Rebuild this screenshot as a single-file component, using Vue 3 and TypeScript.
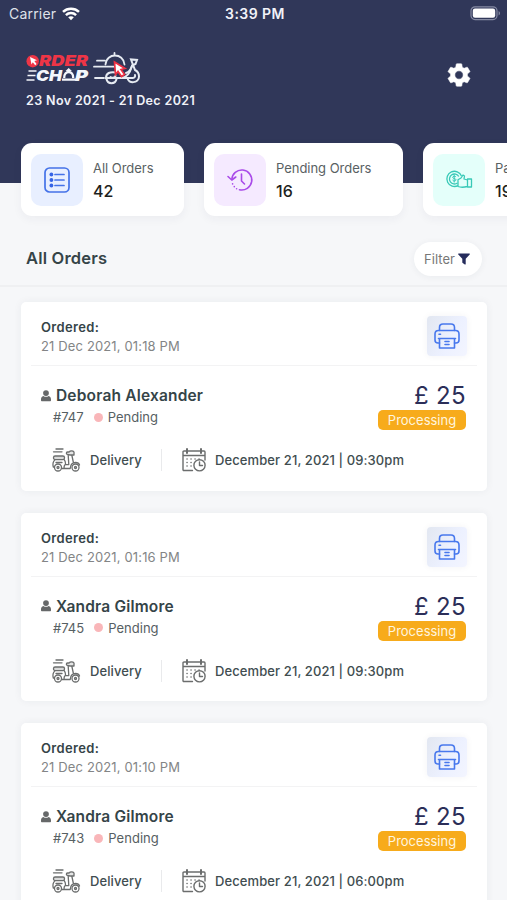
<script setup lang="ts">
interface Stat {
  label: string
  value: string
  kind: 'list' | 'history' | 'paid'
}

interface Order {
  id: string
  placed: string
  customer: string
  status: string
  total: string
  stage: string
  method: string
  due: string
}

const stats: Stat[] = [
  { label: 'All Orders', value: '42', kind: 'list' },
  { label: 'Pending Orders', value: '16', kind: 'history' },
  { label: 'Paid Orders', value: '19', kind: 'paid' },
]

const orders: Order[] = [
  { id: '#747', placed: '21 Dec 2021, 01:18 PM', customer: 'Deborah Alexander', status: 'Pending', total: '£ 25', stage: 'Processing', method: 'Delivery', due: 'December 21, 2021 | 09:30pm' },
  { id: '#745', placed: '21 Dec 2021, 01:16 PM', customer: 'Xandra Gilmore', status: 'Pending', total: '£ 25', stage: 'Processing', method: 'Delivery', due: 'December 21, 2021 | 09:30pm' },
  { id: '#743', placed: '21 Dec 2021, 01:10 PM', customer: 'Xandra Gilmore', status: 'Pending', total: '£ 25', stage: 'Processing', method: 'Delivery', due: 'December 21, 2021 | 06:00pm' },
]
</script>

<template>
  <main class="screen">
    <header class="header">
      <div class="status-bar">
        <div class="carrier">
          <span>Carrier</span>
          <svg width="18" height="14" viewBox="0 0 18 14" fill="none" stroke="#fff" stroke-width="2.5">
            <path d="M1 4.900C5.500.7 12.500.7 17 4.900" />
            <path d="M3.900 8.100C6.800 5.400 11.200 5.400 14.100 8.100" />
            <path d="M6.200 10.300C7.800 8.800 10.200 8.800 11.800 10.300L9 13.300Z" fill="#fff" stroke="none" />
          </svg>
        </div>
        <span class="clock">3:39 PM</span>
        <div class="battery">
          <svg width="31" height="15" viewBox="0 0 31 15">
            <rect x="1" y="0.800" width="26" height="12.800" rx="4" fill="none" stroke="#858aa3" stroke-width="1.200" />
            <rect x="2.800" y="2.600" width="22.400" height="9.200" rx="2.200" fill="#fff" />
            <path d="M28.600 5v4.400c1.900-.8 1.900-3.600 0-4.400Z" fill="#858aa3" />
          </svg>
        </div>
      </div>
      <div class="brand-row">
        <div>
          <svg class="logo" width="116" height="33" viewBox="0 0 116 33">
            <circle cx="6.700" cy="9.200" r="6.200" fill="#ee3546" />
            <path d="m4 5 7 3.300-2.700.8 2.300 2.900-1.400 1.200-2.400-2.900-1.300 2.300Z" fill="#fff" />
            <text class="logo-type" x="13" y="14.200" fill="#ee3546" textLength="49" lengthAdjust="spacingAndGlyphs">RDER</text>
            <path d="M2.500 19h8M1.500 23.500h8M.5 28h8" stroke="#f4f6fb" stroke-width="1.500" />
            <text class="logo-type" x="10" y="28.800" fill="#f4f6fb" textLength="26" lengthAdjust="spacingAndGlyphs">CH</text>
            <path d="M36 27.700h14M38.200 26c-.5-8 9.500-8 9 0" fill="none" stroke="#f4f6fb" stroke-width="2.300" />
            <path d="m39.500 19 3.200-3 3.200 3" fill="#f4f6fb" />
            <text class="logo-type" x="49" y="28.800" fill="#f4f6fb" textLength="13" lengthAdjust="spacingAndGlyphs">P</text>
            <g fill="none" stroke="#e6ebf2" stroke-width="1.800" stroke-linecap="round">
              <path d="M71 8.700h8M68 14.700h22M69 26h9" />
              <path d="M79.500 12.500c1-12 18-12 19 0M88.500 3V1" />
              <path d="M90 20.500c-6-1-10 .5-10 5.500h16c5-1 8-5 9.500-11" stroke-width="2" />
              <path d="M80.500 27c1 5.500 9 5.500 10 0M84.500 25c2 1.500 4 1 5-1" stroke-width="2" />
              <path d="M101.500 26c.5 6 11.500 5.500 11.500-1.500 0-4-2-5.500-4-6.500l-4-10.500 6 .500-1.500 4-3.500 1.500" stroke-width="2" />
              <path d="M100 21c3-1 5-3.500 6-7M94 26h13c1.500 0 2.500-1.500 2-3" stroke-width="2" />
            </g>
            <path d="m88.500 10 10.500 6.500-4 1 3.500 5-3 2-3.500-5-2.500 3Z" fill="#fff" stroke="#ed3043" stroke-width="1.700" />
          </svg>
          <div class="range">23 Nov 2021 - 21 Dec 2021</div>
        </div>
        <svg class="gear" width="28" height="28" viewBox="0 0 24 24" fill="#fff" stroke="#fff" stroke-width=".5">
          <path d="M19.140 12.940c.04-.3.060-.61.060-.94s-.02-.64-.07-.94l2.030-1.580a.49.49 0 0 0 .12-.61l-1.920-3.320a.49.49 0 0 0-.59-.22l-2.390.96a7 7 0 0 0-1.620-.94l-.36-2.540a.48.48 0 0 0-.48-.41h-3.840a.48.48 0 0 0-.47.41l-.36 2.540a7.400 7.400 0 0 0-1.620.94l-2.390-.96a.48.48 0 0 0-.59.22L2.740 8.870a.48.48 0 0 0 .12.61l2.030 1.580c-.05.3-.09.630-.09.940s.02.640.07.940l-2.030 1.580a.49.49 0 0 0-.12.610l1.920 3.320c.12.22.37.290.59.220l2.390-.96c.5.380 1.030.7 1.620.940l.36 2.540c.05.240.240.410.480.410h3.840c.24 0 .44-.17.470-.41l.36-2.540a7 7 0 0 0 1.620-.94l2.390.96c.22.080.47 0 .59-.22l1.920-3.320a.48.48 0 0 0-.12-.61ZM12 15.600a3.600 3.600 0 1 1 0-7.200 3.600 3.600 0 0 1 0 7.200Z" />
        </svg>
      </div>
    </header>

    <section class="stats">
      <article v-for="stat in stats" :key="stat.kind" class="stat" :class="`stat-${stat.kind}`">
        <div class="stat-icon">
          <svg v-if="stat.kind === 'list'" width="26" height="26" viewBox="0 0 26 26" fill="none" stroke="#4472e8" stroke-width="1.700" stroke-linecap="round">
            <rect x="1" y="1" width="24" height="24" rx="4.500" />
            <path d="M11 7.500h9M11 13h9M11 18.500h9" />
            <g fill="#3563e6" stroke="none">
              <circle cx="7.400" cy="7.500" r="1.900" /><circle cx="7.400" cy="13" r="1.900" /><circle cx="7.400" cy="18.500" r="1.900" />
            </g>
          </svg>
          <svg v-else-if="stat.kind === 'history'" width="26" height="24" viewBox="0 0 26 24" fill="none" stroke="#a94be9" stroke-width="1.600" stroke-linecap="round" stroke-linejoin="round">
            <path d="M4.800 11.500A10 10 0 1 1 12.500 21.700" />
            <path d="m1 8.500 3.800 3.500 4-3M14.500 6v7l3 3" />
            <path d="M5.600 15.800v.1M7.300 18.600v.1M9.600 20.700v.1" />
          </svg>
          <svg v-else width="26" height="20" viewBox="0 0 26 20" fill="none" stroke="#38c9b7" stroke-width="1.300" stroke-linejoin="round">
            <path d="M15.500 6A7.600 7.600 0 1 0 12 15.600" />
            <path d="M12.800 6.500a5 5 0 1 0-1.300 6.500" />
            <path d="M10 7c-.5-1.200-3.500-1-3.300.5.200 1.500 3.300.700 3.300 2.300s-3 1.500-3.500.2M8.200 4.800v7.700" stroke-width="1" />
            <path d="M12 16.500V9.800l3-1.800 2-3 1.500 1-.5 3 3.500 1v6.500c-4 1-7 1-9.500 0ZM21.500 9h4v8h-4Z" />
          </svg>
        </div>
        <div class="stat-text">
          <span class="stat-label">{{ stat.label }}</span>
          <strong class="stat-value">{{ stat.value }}</strong>
        </div>
      </article>
    </section>

    <section class="toolbar">
      <h1>All Orders</h1>
      <button class="filter" type="button">
        <span>Filter</span>
        <svg width="12" height="12" viewBox="0 0 12 12" fill="#252c5c"><path d="M.6.500h10.800c.5 0 .7.500.3.900L7.700 5.700V11c0 .5-.5.700-.9.400L4.700 9.900a.8.800 0 0 1-.4-.7V5.700L.3 1.400C-.1 1 .1.500.6.500Z" /></svg>
      </button>
    </section>

    <section class="orders">
      <article v-for="order in orders" :key="order.id" class="order">
        <div class="order-head">
          <div>
            <div class="ordered">Ordered:</div>
            <div class="placed">{{ order.placed }}</div>
          </div>
          <button class="print" type="button" aria-label="Print">
            <svg width="26" height="26" viewBox="0 0 26 26" fill="none" stroke="#4878ed" stroke-width="1.600" stroke-linecap="round" stroke-linejoin="round">
              <path d="M5.500 7.500v-3C5.500 2 6.500 1 9 1h8c2.500 0 3.500 1 3.500 3.500v3" />
              <path d="M5.500 20H4c-2 0-3-1-3-3v-6c0-2.500 1-3.500 3.500-3.500h17c2.500 0 3.500 1 3.500 3.500v6c0 2-1 3-3 3h-1.500" />
              <path d="M4.500 15.500h17M5.500 15.500V25h15v-9.500M11 18.500h4M11 21.500h4M5 11.300h1.500" />
            </svg>
          </button>
        </div>
        <div class="order-body">
          <div>
            <div class="customer">
              <svg width="10" height="12" viewBox="0 0 10 12" fill="#666869"><circle cx="5" cy="3.100" r="2.900" /><path d="M2.400 5.900c1.500 1.200 3.700 1.200 5.200 0C9.300 6.300 10 7.700 10 9.500v.7c0 .7-.4 1.100-1.100 1.100H1.100C.4 11.300 0 10.900 0 10.200v-.7c0-1.800.7-3.200 2.400-3.600Z" /></svg>
              <span>{{ order.customer }}</span>
            </div>
            <div class="meta">
              <span class="order-id">{{ order.id }}</span>
              <i class="dot"></i>
              <span class="pending">{{ order.status }}</span>
            </div>
          </div>
          <div class="amount">
            <div class="total">{{ order.total }}</div>
            <div class="stage">{{ order.stage }}</div>
          </div>
        </div>
        <div class="order-foot">
          <svg class="scooter" width="28" height="24" viewBox="0 0 28 24" fill="none" stroke="#6b6d6d" stroke-width="1.300" stroke-linecap="round" stroke-linejoin="round">
            <path d="M4 1h7M1.500 3.800h8.500" />
            <rect x="1.500" y="8" width="11" height="3.600" rx="1.600" fill="#d9dada" />
            <path d="M3 11.600c-2 2-2.500 4.500-1.700 7.400h1.500M12 11.600c1.200 1 1.600 3 1.600 5h3.200l-.6-9.600M19.800 7l1.600 7.500M9.500 20.500h8.700c.3-4 2.300-6 5.300-6 2 0 3.500.700 4 2.500M13.600 16.600c-1 0-1.500 1-1.500 3M4 14.500h6" />
            <path d="M15.500 6.300c-1.500 0-1.500-2.300 0-2.300h1.700c.8-1.500 3.800-1.500 4.800 0v3h-4Z" fill="#e4e5e5" />
            <circle cx="6" cy="19.500" r="3.500" fill="#fff" /><circle cx="6" cy="19.500" r="1" /><circle cx="23.500" cy="19.500" r="3.500" fill="#fff" /><circle cx="23.500" cy="19.500" r="1" />
          </svg>
          <span class="method">{{ order.method }}</span>
          <i class="separator"></i>
          <svg class="calendar" width="24" height="24" viewBox="0 0 24 24" fill="none" stroke="#6b6d6d" stroke-width="1.400" stroke-linecap="round" stroke-linejoin="round">
            <path d="M10.500 22.500H2c-.8 0-1-.4-1-1V4c0-.7.300-1 1-1h20c.7 0 1 .3 1 1v8M1 7.500h22" />
            <path d="M5 1v4M19 1v4" stroke-width="2" />
            <path d="M5 11h.1M9 11h.1M13 11h.1M17 11h.1M5 14.500h.1M9 14.500h.1M5 18h.1M9 18h.1" stroke-width="1.500" />
            <circle cx="17.500" cy="17.300" r="5.600" /><path d="M17.500 14v3.500h3" />
          </svg>
          <span class="due">{{ order.due }}</span>
        </div>
      </article>
    </section>
  </main>
</template>

<style>
body { background: #f6f7f9; overflow: hidden; }
</style>

<style scoped>
* { box-sizing: border-box; }
.screen {
  width: 507px;
  height: 900px;
  overflow: hidden;
  background: #f6f7f9;
  color: #354448;
  font-family: Inter, "Liberation Sans", sans-serif;
  white-space: nowrap;
}
svg { display: block; flex: none; overflow: visible; }
button { border: 0; padding: 0; font: inherit; }
.header { height: 183px; background: #303759; color: #f0f2f8; }
.status-bar {
  height: 27px;
  padding: 0 6px 0 9px;
  display: grid;
  grid-template-columns: 1fr auto 1fr;
  align-items: center;
  font-size: 14px;
}
.carrier { display: flex; align-items: center; gap: 6px; letter-spacing: .2px; color: #dfe2ea; }
.clock { font-weight: 600; letter-spacing: .45px; }
.battery { display: flex; justify-content: flex-end; }
.brand-row { display: flex; justify-content: space-between; padding: 25px 34px 0 26px; }
.logo-type { font: italic 900 15px Inter, sans-serif; }
.range { margin-top: 7px; font-size: 12.500px; line-height: 18px; font-weight: 600; letter-spacing: .38px; }
.gear { margin-top: 9px; }
.stats { display: flex; gap: 20px; padding-left: 21px; margin-top: -40px; }
.stat {
  flex: none;
  height: 73px;
  width: 163px;
  padding: 11px 10px;
  display: flex;
  gap: 10px;
  background: #fff;
  border-radius: 11px;
  box-shadow: 0 3px 10px rgba(40, 45, 70, .05);
}
.stat-history { width: 199px; }
.stat-icon { width: 52px; height: 52px; border-radius: 10px; display: grid; place-items: center; background: #e8efff; }
.stat-history .stat-icon { background: #f5eaff; }
.stat-paid .stat-icon { background: #e4fffa; }
.stat-text { display: flex; flex-direction: column; }
.stat-label { font-size: 13px; line-height: 18px; margin-top: 5px; letter-spacing: -.03px; color: #596163; }
.stat-value { font-size: 16px; line-height: 22px; margin-top: 3px; font-weight: 500; color: #1d1f20; }
.toolbar {
  height: 71px;
  padding: 26px 25px 0 26px;
  display: flex;
  justify-content: space-between;
  align-items: flex-start;
  border-bottom: 2px solid #eff0f2;
}
.toolbar h1 { margin: 5px 0 0; font-size: 16.500px; line-height: 22px; font-weight: 600; letter-spacing: .2px; }
.filter {
  width: 68px;
  height: 34px;
  display: flex;
  align-items: center;
  justify-content: center;
  gap: 3px;
  padding-right: 2px;
  border-radius: 17px;
  background: #fff;
  color: #777;
  font-size: 13px;
  box-shadow: 0 1px 7px rgba(40, 45, 70, .06);
}
.orders { padding: 15px 20px 0 21px; display: flex; flex-direction: column; gap: 22px; }
.order { height: 188.700px; flex: none; background: #fff; border-radius: 5px; box-shadow: 0 0 9px rgba(40, 45, 70, .06); }
.order-head {
  height: 64px;
  margin: 0 10px;
  padding: 14px 10px 0;
  display: flex;
  justify-content: space-between;
  border-bottom: 1px solid #f3f3f4;
}
.ordered { margin-top: 2px; font-size: 13px; line-height: 19px; font-weight: 600; letter-spacing: .34px; }
.placed { font-size: 13px; line-height: 18px; color: #838586; letter-spacing: .14px; }
.print {
  width: 40px;
  height: 40px;
  border-radius: 4px;
  display: grid;
  place-items: center;
  background: linear-gradient(120deg, #e2e7f1, #edf1ff 60%, #f3f5ff);
  box-shadow: 0 0 7px rgba(40, 45, 70, .05);
}
.order-body { height: 66px; padding: 16px 21px 0 20px; display: flex; justify-content: space-between; }
.customer { display: flex; align-items: center; gap: 5px; height: 27px; font-size: 15.500px; font-weight: 600; letter-spacing: .18px; }
.meta { display: flex; align-items: center; height: 16px; padding-left: 12px; font-size: 13px; letter-spacing: .02px; color: #566063; }
.dot { width: 9px; height: 9px; border-radius: 50%; background: #f9b6b9; margin: 0 5px 0 10px; }
.amount { display: flex; flex-direction: column; align-items: flex-end; }
.total { font-size: 24px; line-height: 28px; letter-spacing: .35px; color: #2b2e58; }
.stage {
  width: 88px;
  height: 20px;
  border-radius: 5px;
  background: #f7ab1b;
  color: #fff5df;
  font-size: 13px;
  line-height: 20px;
  text-align: center;
}
.order-foot { display: flex; align-items: center; height: 56px; padding-left: 31px; font-size: 13px; font-weight: 500; color: #414d50; }
.method { width: 52px; margin-left: 10px; letter-spacing: .1px; }
.separator { width: 1px; height: 22px; margin: 0 20px 0 19px; background: #e9eaec; }
.due { margin-left: 9px; letter-spacing: .1px; }
</style>
